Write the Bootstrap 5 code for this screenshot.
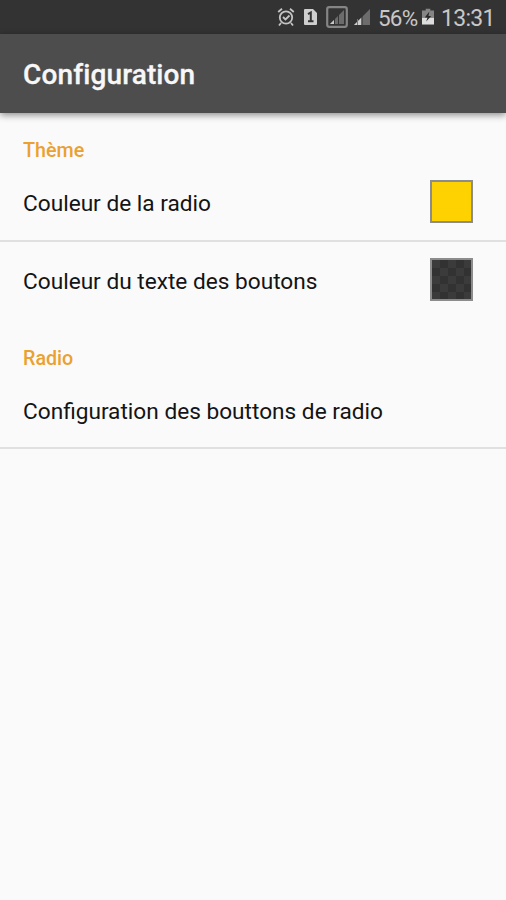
<!DOCTYPE html>
<html lang="fr">
<head>
<meta charset="utf-8">
<meta name="viewport" content="width=device-width, initial-scale=1">
<title>Configuration</title>
<link href="https://cdn.jsdelivr.net/npm/bootstrap@5.3.0/dist/css/bootstrap.min.css" rel="stylesheet">
<style>
body{font-family:Roboto,sans-serif;background:#fafafa;color:#141414;min-height:900px;line-height:1.2}
.status-bar{height:34px;background:#333;color:#c8c8c8;font-size:23px;padding:3px 12px 0 0}
.status-bar svg{flex:none;margin-top:-3px}
.pct{width:40px;font-size:22.5px;letter-spacing:-.8px;white-space:nowrap;margin-left:6px;margin-right:4px}
.clock{width:53px;letter-spacing:-.7px;white-space:nowrap;margin-left:7px}
.app-bar{height:79px;background:#4d4d4d;padding:2px 23px 0;box-shadow:0 2px 7px rgba(0,0,0,.45)}
.app-title{font-size:28px;font-weight:500;color:#f7f7f7;letter-spacing:.13px;-webkit-text-stroke:.3px #f7f7f7}
.section-title{height:53px;padding:26px 23px 0;font-size:19.7px;font-weight:500;color:#eba12f}
.section-title.second{height:54px;padding-top:27px}
.pref{padding:1px 33px 0 23px;height:74px;font-size:22.65px;border:0;background:transparent;color:#141414;border-radius:0}
.list-group-flush>.pref.lined{height:76px;border-bottom:2px solid #e0e0e0}
.pref.tall{height:78px}
.list-group-flush>.pref.single{height:75px;padding-top:2px}
.swatch{width:43px;height:43px;border:2px solid #8c8c8c;background:#fdd200;margin-top:-4px}
.swatch.checker{background:repeating-conic-gradient(#323232 0 25%,#3b3b3b 0 50%) 0 0/16px 16px}
</style>
</head>
<body>
<div class="status-bar d-flex align-items-center justify-content-end">
  <svg width="18" height="20" viewBox="0 0 18 20" fill="none" stroke="#c4c4c4" stroke-width="1.8"><circle cx="9" cy="10.5" r="6.2"/><path d="M1.2 5 5 1.800M16.800 5 13 1.800M4 16l-2 2.500M14 16l2 2.500M6 10l2.500 2.500 4-4"/></svg>
  <svg class="ms-2" width="15" height="18" viewBox="0 0 15 18"><path d="M1 2q0-1 1-1h8l4 4v11q0 1-1 1H2q-1 0-1-1z" fill="#cfcfcf"/><path d="M5 6.200 7.800 4.500V13M5 13.200h5.500" fill="none" stroke="#333" stroke-width="2"/></svg>
  <svg class="ms-2" width="22" height="22" viewBox="0 0 22 22"><rect x="1.200" y="1.200" width="19.600" height="19.600" rx="2" fill="none" stroke="#858585" stroke-width="2.200"/><path d="M4 18 18 4v14z" fill="#6c6c6c"/><path d="M4 18 8 14v4z" fill="#c8c8c8"/><path d="M8.500 5v13M12.500 5v13" stroke="#333" stroke-width="1"/></svg>
  <svg class="ms-1" width="20" height="18" viewBox="0 0 20 18"><path d="M2 17 18 1v16z" fill="#6c6c6c"/><path d="M2 17 9.500 9.500V17z" fill="#d0d0d0"/><path d="M5.500 11v6" stroke="#777" stroke-width="1"/><path d="M10 8v9" stroke="#333" stroke-width="1"/></svg>
  <span class="pct">56%</span>
  <svg width="12" height="18" viewBox="0 0 13 18"><path d="M4 0h5v2h4v15H0V2h4z" fill="#858585"/><path d="M0 10h13v7H0z" fill="#ddd"/><path d="M8 3 3 9.500h3L4.500 14 10 8H7z" fill="#292929"/></svg>
  <span class="clock">13:31</span>
</div>
<header class="app-bar d-flex align-items-center position-relative"><h1 class="app-title m-0">Configuration</h1></header>
<main>
  <h2 class="section-title m-0">Thème</h2>
  <div class="list-group list-group-flush">
    <div class="list-group-item pref lined d-flex align-items-center justify-content-between"><span>Couleur de la radio</span><span class="swatch"></span></div>
    <div class="list-group-item pref tall d-flex align-items-center justify-content-between"><span>Couleur du texte des boutons</span><span class="swatch checker"></span></div>
  </div>
  <h2 class="section-title second m-0">Radio</h2>
  <div class="list-group list-group-flush">
    <div class="list-group-item pref lined single d-flex align-items-center"><span>Configuration des bouttons de radio</span></div>
  </div>
</main>
<script src="https://cdn.jsdelivr.net/npm/bootstrap@5.3.0/dist/js/bootstrap.bundle.min.js"></script>
</body>
</html>
